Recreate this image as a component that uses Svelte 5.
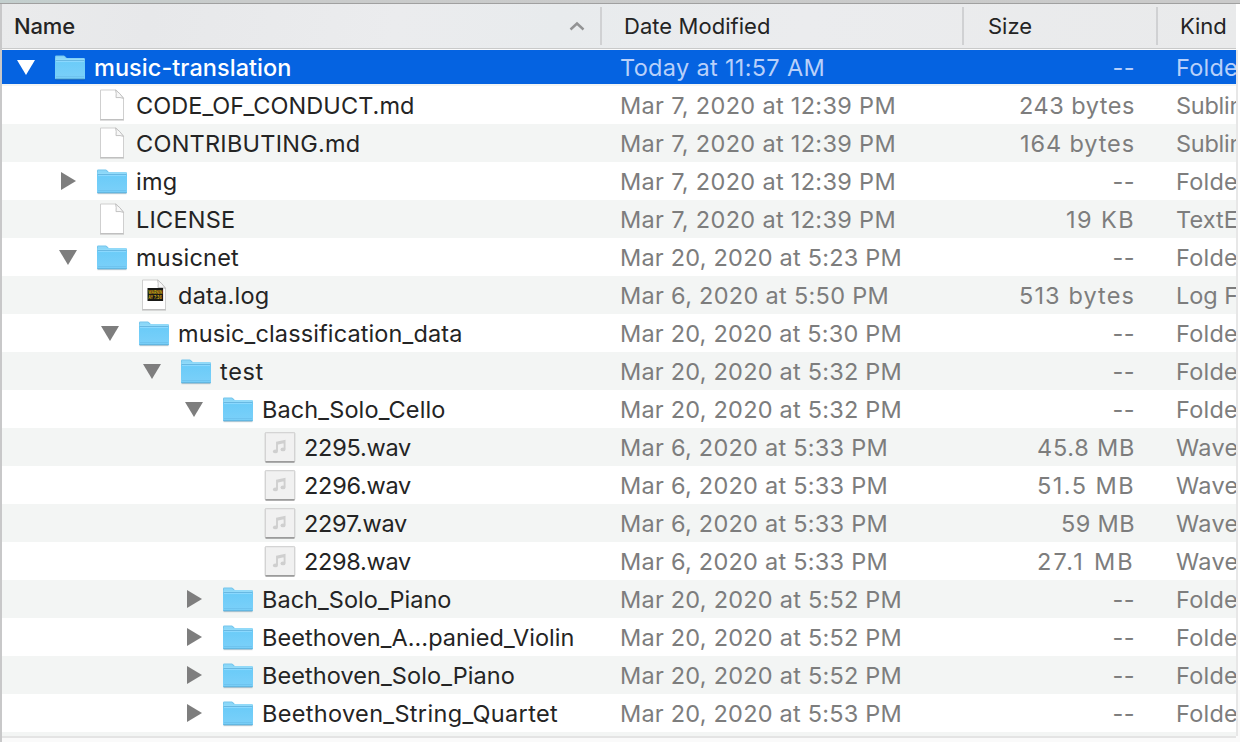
<script>
  // w is the drawn width of each label; tracking is spread over its characters
  const columns = [
    { t: 'Name', w: 59 },
    { t: 'Date Modified', w: 144.5 },
    { t: 'Size', w: 42 },
    { t: 'Kind', w: 44.5 }
  ];
  const mar7 = ['Mar 7, 2020 at 12:39 PM', 274];
  const mar6 = ['Mar 6, 2020 at 5:33 PM', 266];
  const m = (t) => ['Mar 20, 2020 at ' + t + ' PM', 280];
  const none = ['--', 20.5];
  const folder = ['Folder', 69];
  const sub = ['Sublime Text', 138];
  const wave = ['Waveform', 114];

  const rows = [
    { n: 'music-translation', w: 195.5, d: 0, k: 'folder', o: true, date: ['Today at 11:57 AM', 203], size: none, kind: folder, sel: true },
    { n: 'CODE_OF_CONDUCT.md', w: 276.5, d: 1, k: 'file', date: mar7, size: ['243 bytes', 114], kind: sub },
    { n: 'CONTRIBUTING.md', w: 222.5, d: 1, k: 'file', date: mar7, size: ['164 bytes', 113], kind: sub },
    { n: 'img', w: 39.5, d: 1, k: 'folder', o: false, date: mar7, size: none, kind: folder },
    { n: 'LICENSE', w: 97.5, d: 1, k: 'file', date: mar7, size: ['19 KB', 67], kind: ['TextEdit', 88] },
    { n: 'musicnet', w: 101, d: 1, k: 'folder', o: true, date: m('5:23'), size: none, kind: folder },
    { n: 'data.log', w: 89.5, d: 2, k: 'log', date: ['Mar 6, 2020 at 5:50 PM', 267], size: ['513 bytes', 114], kind: ['Log File', 85] },
    { n: 'music_classification_data', w: 282.5, d: 2, k: 'folder', o: true, date: m('5:30'), size: none, kind: folder },
    { n: 'test', w: 42, d: 3, k: 'folder', o: true, date: m('5:32'), size: none, kind: folder },
    { n: 'Bach_Solo_Cello', w: 181.5, d: 4, k: 'folder', o: true, date: m('5:32'), size: none, kind: folder },
    { n: '2295.wav', w: 105, d: 5, k: 'wav', date: mar6, size: ['45.8 MB', 96], kind: wave },
    { n: '2296.wav', w: 105, d: 5, k: 'wav', date: mar6, size: ['51.5 MB', 96], kind: wave },
    { n: '2297.wav', w: 101, d: 5, k: 'wav', date: mar6, size: ['59 MB', 72], kind: wave },
    { n: '2298.wav', w: 105, d: 5, k: 'wav', date: mar6, size: ['27.1 MB', 96], kind: wave },
    { n: 'Bach_Solo_Piano', w: 187.5, d: 4, k: 'folder', o: false, date: m('5:52'), size: none, kind: folder },
    { n: 'Beethoven_A…panied_Violin', w: 310.5, d: 4, k: 'folder', o: false, date: m('5:52'), size: none, kind: folder },
    { n: 'Beethoven_Solo_Piano', w: 251, d: 4, k: 'folder', o: false, date: m('5:52'), size: none, kind: folder },
    { n: 'Beethoven_String_Quartet', w: 294, d: 4, k: 'folder', o: false, date: m('5:53'), size: none, kind: folder }
  ];

  function track(node, width) {
    const apply = () => {
      node.style.letterSpacing = '0px';
      const natural = node.getBoundingClientRect().width;
      const gap = (width + 2 - natural) / node.textContent.length;
      node.style.letterSpacing = gap.toFixed(3) + 'px';
    };
    apply();
    document.fonts?.ready.then(apply);
  }
</script>

<div class="window">
  <div class="toolbar-edge"></div>
  <div class="body">
    <div class="list">
      <div class="header">
        {#each columns as c, i}
          <div class="head h{i}">
            <span class="label" use:track={c.w}>{c.t}</span>
            {#if i === 0}
              <svg class="sort" width="16" height="10" viewBox="0 0 16 10"><path d="M1.5 8.5 8 2.5l6.5 6" fill="none" stroke="#929394" stroke-width="2.4" /></svg>
            {/if}
          </div>
        {/each}
      </div>
      {#each rows as r}
        <div class="row" class:sel={r.sel}>
          <div class="name" style="padding-left: {r.d * 42}px">
            <span class="tri">
              {#if r.o === true}
                <svg width="18" height="38" viewBox="0 0 18 38"><path d="M0 12h18L9 27z" fill="currentColor" /></svg>
              {:else if r.o === false}
                <svg width="18" height="38" viewBox="0 0 18 38"><path d="M2 10v18l15-9z" fill="currentColor" /></svg>
              {/if}
            </span>
            <svg class="icon" width="38" height="38" viewBox="0 0 38 38">
              {#if r.k === 'folder'}
                <path d="M4 31V8.8q0-1.3 1.3-1.3h7.5c1.5 0 2 2.7 3.8 2.7h16q1.4 0 1.4 1.4V31z" fill="#74c5ec" />
                <path d="M4.5 10.2h29v3.2h-29z" fill="#91dbfa" />
                <path d="M5 8.5h8l2 2.2H5z" fill="#8bd7f8" />
                <path d="M4 12.7h30v17.1q0 1.2-1.2 1.2H5.2Q4 31 4 29.8z" fill="url(#front)" />
                <path d="M4.5 12.6h29" stroke="#65b5df" stroke-width="1" />
                <path d="M5 13.6h28" stroke="#8edaff" stroke-width="1" />
                <path d="M5 28.6h28" stroke="#68bde9" stroke-width=".7" />
                <path d="M4.5 30.9h29" stroke="#55a6d2" stroke-width="1" />
                <path d="M4.5 31.8h29" stroke="#000" stroke-opacity=".13" />
              {:else if r.k === 'wav'}
                <rect x="4.2" y="4.5" width="29.6" height="29.5" rx="1" fill="#f1f1f1" stroke="#c6c6c6" />
                <path d="M5 5h28" stroke="#e2e2e2" />
                <path d="M4.5 33.9h29" stroke="#868686" stroke-width="1.3" />
                <path d="M16 23v-8.4l7.6-1.7v8.2M16 15.8l7.6-1.7" fill="none" stroke="#cfcfcf" stroke-width="1.9" />
                <ellipse cx="14.4" cy="23.4" rx="2.5" ry="1.9" fill="#cfcfcf" />
                <ellipse cx="22" cy="21.4" rx="2.5" ry="1.9" fill="#cfcfcf" />
              {:else}
                <path d="M7.5 4h15.6l7.4 8v21.5h-23z" fill="#fff" stroke="#cfcfcf" stroke-linejoin="round" />
                <path d="M7 34h24" stroke="#aaa" stroke-opacity=".8" />
                <path d="M22.6 4q1 3.4.4 7.6 4.4-.5 7.5.8-3.2-5.1-7.9-8.4z" fill="#f7f7f7" stroke="#bcbcbc" stroke-width=".9" stroke-linejoin="round" />
                {#if r.k === 'log'}
                  <rect x="12.5" y="12" width="15.6" height="13" fill="#191916" />
                  <text x="13.2" y="17.7" textLength="14" lengthAdjust="spacingAndGlyphs" class="mini">WARNIN</text>
                  <text x="13.2" y="23.4" textLength="13.5" lengthAdjust="spacingAndGlyphs" class="mini">AY 7:36</text>
                {/if}
              {/if}
            </svg>
            <span class="label" use:track={r.w}>{r.n}</span>
          </div>
          <div class="date"><span class="label" use:track={r.date[1]}>{r.date[0]}</span></div>
          <div class="size"><span class="label" use:track={r.size[1]}>{r.size[0]}</span></div>
          <div class="kind"><span class="label" use:track={r.kind[1]}>{r.kind[0]}</span></div>
        </div>
      {/each}
      <div class="stub"></div>
      <div class="rule"></div>
    </div>
    <div class="scroller"></div>
  </div>
  <svg width="0" height="0" class="defs"><defs><linearGradient id="front" x1="0" y1="0" x2="0" y2="1"><stop offset="0" stop-color="#6acbf8" /><stop offset="1" stop-color="#7bd0f9" /></linearGradient></defs></svg>
</div>

<style>
  :global(body) { margin: 0; overflow: hidden; }
  .window { width: 1240px; height: 742px; overflow: hidden; background: #fafafa; font-family: Inter, "Liberation Sans", sans-serif; }
  .defs { display: block; }
  .toolbar-edge { height: 3px; background: linear-gradient(90deg, #c3cfce, #c9cbcb 20%, #cacaca); border-bottom: 1px solid #a0a0a0; }
  .body { display: flex; height: 738px; }
  .list { width: 1234px; border-left: 2px solid #c8c8c9; overflow: hidden; flex: none; }
  .scroller { width: 2px; height: 686px; margin-top: 46px; background: #e7e7e7; box-shadow: 0 -46px 0 #fff, 2px -46px 0 #fff; }
  .header { height: 44px; display: grid; grid-template-columns: 600px 362px 194px 78px; background: linear-gradient(100deg, #eaebec, #e7e8ea 12%, #ebecee 32%, #e8ebed 45%, #ebecee 65%, #e9eaeb); border-bottom: 1px solid #c9caca; color: #242424; font-size: 22px; line-height: 45px; }
  .head { display: flex; padding-left: 22px; white-space: nowrap; }
  .h0 { padding-left: 12px; justify-content: space-between; font-weight: 500; }
  .h2 { padding-left: 24px; }
  .head:not(.h3) { border-right: 2px solid; border-image: linear-gradient(transparent 4px, #d0d1d3 4px, #d0d1d3 40px, transparent 40px) 1; }
  .sort { margin: 17px 15px 0 0; }
  .row { height: 38px; display: grid; grid-template-columns: 618px 355px 160px 101px; font-size: 23.5px; line-height: 40px; color: #7d7d7d; background: #fff; white-space: nowrap; }
  .row:nth-child(even) { background: #f3f5f4; }
  .row.sel { height: 34px; margin-top: 1px; line-height: 36px; background: #0563e1; color: #b8d0fa; border-bottom: 2px solid #f3f5f4; }
  .sel .tri, .sel .icon { margin-top: -2px; }
  .name { display: flex; color: #242424; }
  .sel .name { color: #fff; font-weight: 500; }
  .tri { width: 18px; height: 38px; margin-left: 15px; color: #7e7e7e; flex: none; }
  .tri svg { display: block; }
  .sel .tri { color: #fff; }
  .icon { margin-left: 16px; flex: none; }
  .name .label { margin-left: 5px; }
  .size { display: flex; justify-content: flex-end; }
  .kind { padding-left: 41px; }
  .label { display: inline-block; flex: none; }
  .mini { font: 700 5.2px Inter, sans-serif; fill: #d1a515; }
  .stub { height: 4px; background: #f3f5f4; }
  .rule { height: 2px; background: #e4e4e4; }
</style>
